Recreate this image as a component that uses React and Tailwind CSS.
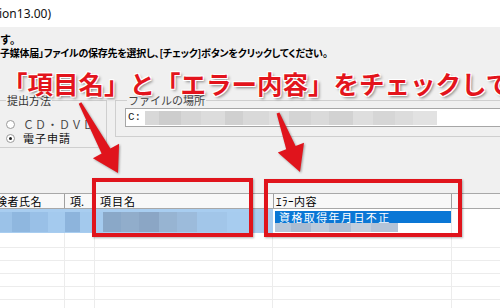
import React from "react";

// モザイク部分（ぼかし）を色ブロックで表現
function Mosaic({ cells, className = "" }) {
  return (
    <div className={`flex ${className}`}>
      {cells.map(([w, c], i) => (
        <div key={i} className="h-full shrink-0" style={{ width: w, background: c }} />
      ))}
    </div>
  );
}

function Radio({ checked }) {
  return (
    <span className="w-[9px] h-[9px] rounded-full border border-[#9a9a9a] bg-white flex items-center justify-center">
      {checked && <span className="w-[3px] h-[3px] rounded-full bg-[#222]" />}
    </span>
  );
}

const inputBlur = [
  [14, "#d8d8d8"], [22, "#cdcdcd"], [20, "#d6d6d6"], [24, "#dcdcdc"], [18, "#d0d0d0"],
  [26, "#d9d9d9"], [20, "#e0e0e0"], [22, "#d4d4d4"], [18, "#dadada"], [24, "#d2d2d2"],
  [20, "#dedede"], [22, "#d6d6d6"], [18, "#dcdcdc"], [24, "#e2e2e2"],
];

const row1Left = [
  [12, "#9bc2e8"], [18, "#8fb7df"], [18, "#99c0e7"], [17, "#a4caee"],
  [15, "#8db4dc"], [15, "#a3c9ed"],
  [8, "#a5cbef"], [18, "#8aa8c8"], [18, "#91adcb"], [20, "#8ba6c5"], [18, "#97b4d2"],
  [20, "#9cbbdb"], [30, "#a2c6e9"], [46, "#a7ccef"],
];

const row1Err = [
  [16, "#b6c6d9"], [20, "#a9bbd1"], [18, "#bccadb"], [22, "#aebed3"], [20, "#c2cedd"], [27, "#b3c3d7"],
];

function App() {
  const ui = "font-[Noto_Sans_CJK_JP,sans-serif]";
  const cols = "grid grid-cols-[65px_30px_178px_179px_1fr]";

  return (
    <div className={`relative w-[500px] h-[308px] overflow-hidden bg-[#f0f0f0] text-black ${ui}`}>
      {/* タイトルバー */}
      <div className="h-[27px] bg-white flex items-center -ml-[1px] text-[12px] font-[Noto_Sans,sans-serif] text-[#111]">
        ion13.00)
      </div>

      {/* 説明文 */}
      <div className="pt-[5px] text-[11px] leading-[14px] font-bold">す。</div>
      <div className="text-[10px] leading-[14px] font-bold whitespace-nowrap tracking-[-0.25px] [font-feature-settings:'palt']">
        子媒体届」ファイルの保存先を選択し、[チェック]ボタンをクリックしてください。
      </div>

      {/* グループボックス */}
      <div className="flex mt-[33px] items-start">
        <fieldset className="-ml-[10px] w-[117px] h-[55px] border border-[#cfcfcf] pl-[15px]">
          <legend className="text-[11px] leading-[14px] text-[#333] px-[1px]">提出方法</legend>
          <div className="mt-[10px] h-[14px] flex items-center gap-[8px] text-[11px] tracking-[1px] text-[#444]">
            <Radio />
            <span>ＣＤ・ＤＶＤ</span>
          </div>
          <div className="h-[14px] flex items-center gap-[8px] text-[11px] tracking-[1px] text-[#111]">
            <Radio checked />
            <span>電子申請</span>
          </div>
        </fieldset>

        <fieldset className="ml-[8px] flex-1 -mr-[20px] h-[44px] border border-[#cfcfcf] pl-[11px]">
          <legend className="text-[11px] leading-[14px] text-[#444] px-[1px]">ファイルの場所</legend>
          <div className="-ml-[2px] mt-[1px] h-[19px] bg-white border border-[#a6a6a6] border-r-0 flex items-center pl-[2px]">
            <span className="text-[11px] font-[Liberation_Mono,monospace] text-[#222]">C:</span>
            <Mosaic cells={inputBlur} className="ml-[4px] h-[14px]" />
          </div>
        </fieldset>
      </div>

      {/* 一覧 */}
      <div className="mt-[45px] bg-white">
        <div className={`${cols} h-[16px] border-y border-[#a8a8a8] bg-[#f8f8f8] text-[11px] leading-[14px] whitespace-nowrap`}>
          <div className="border-r border-[#a0a0a0] tracking-[0.5px] -ml-[4px]">険者氏名</div>
          <div className="border-r border-[#a0a0a0] pl-[5px]">項.</div>
          <div className="pl-[5px] tracking-[1px]">項目名</div>
          <div className="border-x border-[#a0a0a0] pl-[2px] tracking-[0.5px]">ｴﾗｰ内容</div>
          <div />
        </div>

        {/* 1行目 */}
        <div className={`${cols} h-[24px]`}>
          <div className="col-span-3 bg-[#a8cdf0] pt-[3px] pb-[1px]">
            <Mosaic cells={row1Left} className="h-full" />
          </div>
          <div className="border-r border-[#e6e6e6] pt-[2px] pl-[2px]">
            <div className="h-[12px] bg-[#0a77d5] text-white text-[11px] leading-[12px] tracking-[1.4px] pl-[4px] whitespace-nowrap">
              資格取得年月日不正
            </div>
            <Mosaic cells={row1Err} className="h-[9px]" />
          </div>
          <div />
        </div>

        {/* 空行 */}
        {[15, 13, 13, 13, 13, 13].map((h, i) => (
          <div key={i} className={`${cols} border-b border-[#ececec]`} style={{ height: h }}>
            <div className="border-r border-[#ececec]" />
            <div className="border-r border-[#ececec]" />
            <div className="border-r border-[#ececec]" />
            <div className="border-r border-[#ececec]" />
            <div />
          </div>
        ))}
      </div>

      {/* 注釈：赤枠 */}
      <div className="absolute left-[92px] top-[178px] w-[161px] h-[59px] border-[4px] border-[#e0141c] shadow-[1px_1px_2px_rgba(0,0,0,0.3)]" />
      <div className="absolute left-[264px] top-[179px] w-[198px] h-[58px] border-[4px] border-[#e0141c] shadow-[1px_1px_2px_rgba(0,0,0,0.3)]" />

      {/* 注釈：矢印 */}
      <svg
        className="absolute left-0 top-0 [filter:drop-shadow(1px_1px_1px_rgba(0,0,0,0.35))]"
        width="500"
        height="308"
        viewBox="0 0 500 308"
      >
        <polygon
          fill="#e0141c"
          points="78.7,103.7 81.3,102.3 110.4,148.6 119.1,143.7 118,173 92.9,158.3 101.6,153.4"
        />
        <polygon
          fill="#e0141c"
          points="276.6,113.5 279.4,112.5 295.6,145.9 304,142.7 300,172 277.8,152.5 286.2,149.3"
        />
      </svg>

      {/* 注釈：赤文字 */}
      <div className="absolute left-[2px] top-[70px] whitespace-nowrap text-[25.5px] leading-none font-bold text-[#e3141c] [text-shadow:1px_1px_0_#fff,-1px_-1px_0_#fff,1px_-1px_0_#fff,-1px_1px_0_#fff,2px_2px_3px_rgba(0,0,0,0.45)]">
        「項目名」と「エラー内容」をチェックして
      </div>
    </div>
  );
}

export default App;
